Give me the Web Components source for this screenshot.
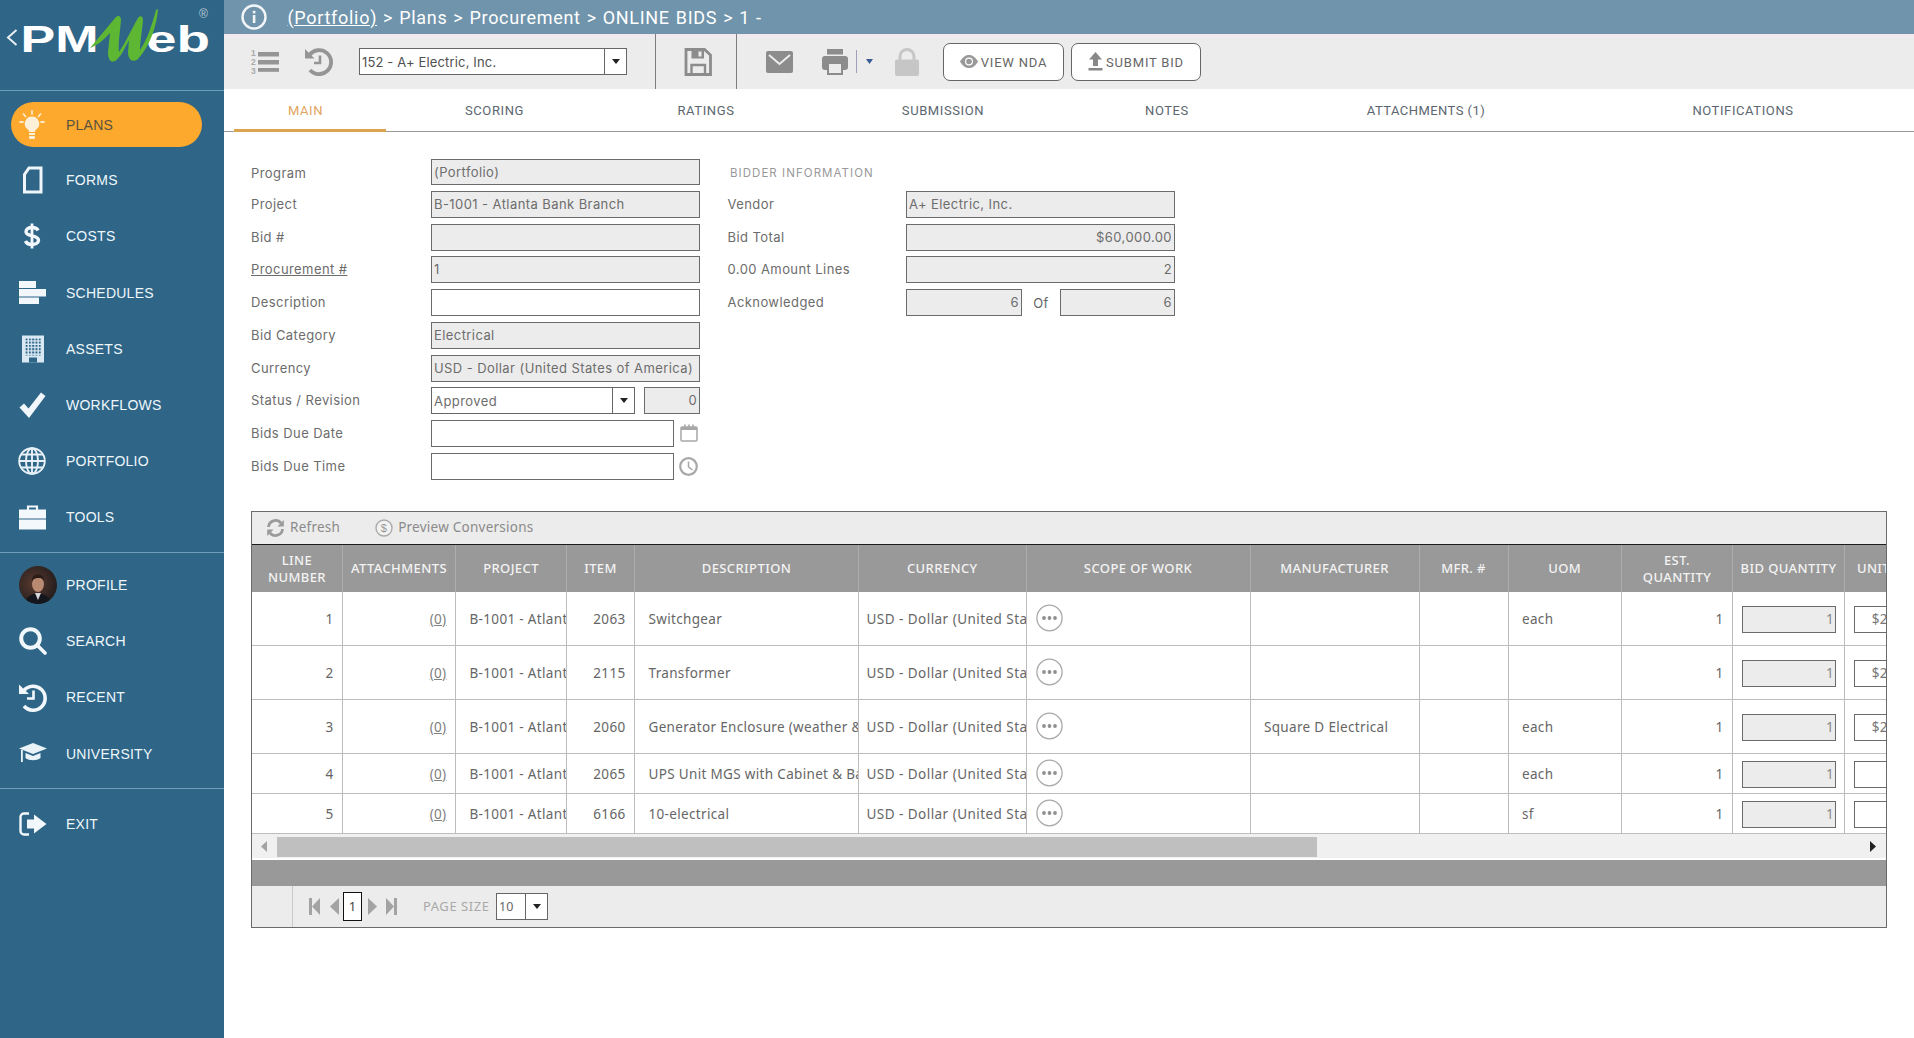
<!DOCTYPE html>
<html lang="en">
<head>
<meta charset="utf-8">
<title>PMWeb Online Bids</title>
<style>
html,body{margin:0;padding:0;height:100%;background:#fff;overflow:hidden}
body{font-family:"Liberation Sans",Arial,sans-serif}
pm-app{--form:Inter,"Noto Sans",sans-serif;--tbl:"Noto Sans",Roboto,sans-serif}
</style>
</head>
<body>
<script>
function def(tag, css, html, after){
  customElements.define(tag, class extends HTMLElement{
    connectedCallback(){
      if(this.shadowRoot) return;
      const r=this.attachShadow({mode:'open'});
      r.innerHTML='<style>'+css+'</style>'+(typeof html==='function'?html(this):html);
      if(after) after(this,r);
    }
  });
}
def('pm-app',':host{display:flex;height:1038px;width:1914px;overflow:hidden}main{flex:1;min-width:0;display:flex;flex-direction:column}',
 '<slot name="side"></slot><main><slot></slot></main>');

def('pm-sidebar',`:host{display:flex;flex-direction:column;width:224px;flex:none;background:#2f6587;color:#fff}
 .logo{height:90px;border-bottom:1px solid #6f9ebd;box-sizing:content-box}
 svg{display:block}
 .g1{padding:5px 0 6px;border-bottom:1px solid #6f9ebd}
 .g2{padding:4.500px 0 6px;border-bottom:1px solid #6f9ebd}
 .g3{padding:7px 0}`,
 `<div class="logo"><svg width="224" height="90" viewBox="0 0 224 90">
   <path d="M16.500 30 L8 37.500 L16.500 45" fill="none" stroke="#e8eef2" stroke-width="2"/>
   <text x="20.500" y="52" font-family="Liberation Sans" font-weight="700" font-size="36" fill="#fff" textLength="78" lengthAdjust="spacingAndGlyphs">PM</text>
   <text x="146" y="52" font-family="Liberation Sans" font-weight="700" font-size="36" fill="#fff" textLength="64" lengthAdjust="spacingAndGlyphs">eb</text>
   <path d="M90 48 L116 17 C118 15 121 16 121 20 C120 32 118 44 119 52 C126 42 132 28 138 18 C140 15 143 16 143 20 C142 32 140 42 140 50 C147 40 152 25 156 10 L158 9 C157 25 150 46 138 59 C133 63 128 60 128 52 L129 40 C124 50 120 58 115 61 C111 63 108 60 108 52 L110 33 C104 40 96 46 90 48Z" fill="#5eb733"/>
   <text x="199" y="18" font-family="Liberation Sans" font-size="12" fill="#b9c9d4">®</text>
  </svg></div>
  <div class="g1"><slot name="a"></slot></div>
  <div class="g2"><slot name="b"></slot></div>
  <div class="g3"><slot name="c"></slot></div>`);

def('pm-nav',`:host{display:flow-root;height:56.200px;position:relative}
 .row{display:flex;align-items:center;height:100%;padding-left:19px;font:14px "Liberation Sans",Arial,sans-serif;letter-spacing:.25px;color:#eef7fc}
 .ic{width:47px;flex:none;display:flex;align-items:center}
 :host([active]) .row{color:#5a5240;background:#fca92d;border-radius:23px;height:45px;margin:6px 22px 0 11px;padding-left:8px}`,
 '<div class="row"><span class="ic"><slot name="icon"></slot></span><slot></slot></div>');

def('pm-crumbs',`:host{display:flex;align-items:center;height:34px;background:#7094ab;color:#fff;font:18px Roboto,sans-serif;letter-spacing:.7px;word-spacing:.8px;white-space:nowrap;flex:none}
 svg{margin:0 20.500px 0 17px;display:block}`,
 `<svg width="26" height="26" viewBox="0 0 26 26"><circle cx="13" cy="13" r="11.500" fill="none" stroke="#f2f6f9" stroke-width="2.400"/><rect x="11.800" y="11" width="2.600" height="8" fill="#f2f6f9"/><rect x="11.800" y="6.800" width="2.600" height="2.600" fill="#f2f6f9"/></svg><span><slot></slot></span>`);

def('pm-toolbar',`:host{display:flex;align-items:center;height:55px;background:linear-gradient(#f0e9ed 0 3px,#ececec 3px);position:relative;flex:none}
 ::slotted(*){flex:none}`,'<slot></slot>');

def('pm-vsep',':host{display:block;width:1px;height:55px;background:#7d7d7d;align-self:flex-start}','');

def('pm-combo',`:host{display:flex;box-sizing:border-box;height:27px;border:1px solid #666;background:#fff;color:#505050;font:13px/26px var(--form);letter-spacing:.15px}
 .t{flex:1;padding-left:2px;overflow:hidden;white-space:nowrap}
 .a{flex:none;width:var(--aw,21px);border-left:1px solid #666;display:flex;align-items:center;justify-content:center}
 .a i{display:block;border:4.500px solid transparent;border-top:5.500px solid #222;border-bottom:0}`,
 '<div class="t"><slot></slot></div><div class="a"><i></i></div>');

def('pm-btn',`:host{display:flex;align-items:center;justify-content:center;gap:3px;box-sizing:border-box;height:38px;background:#fff;border:1px solid #666;border-radius:7px;color:#666;font:13px Roboto,sans-serif;letter-spacing:.8px}
 span{position:relative;top:1px}`,
 '<slot name="icon"></slot><span><slot></slot></span>');

def('pm-tabs',`:host{display:flex;height:43px;box-sizing:border-box;border-bottom:1px solid #9a9a9a;padding-left:9.600px;flex:none}`,'<slot></slot>');
def('pm-tab',`:host{display:flex;align-items:center;justify-content:center;box-sizing:border-box;height:43px;font:13px Roboto,sans-serif;letter-spacing:.6px;color:#5c6670}
 span{position:relative;top:-.5px}
 :host([active]){color:#e2a561;border-bottom:3px solid #dba44f;padding:3px 9px 0 0}`,'<span><slot></slot></span>');

def('pm-form',`:host{display:flex;padding:26.400px 0 0 27px;flex:none;height:379px;box-sizing:border-box;font:13px var(--form);letter-spacing:.42px;color:#6c6c6c}
 ::slotted(pm-col:first-child){width:449px}
 ::slotted(pm-col:last-child){width:447.500px;margin-left:27.500px}`,'<slot></slot>');
def('pm-col',':host{display:block}','<slot></slot>');
def('pm-row',`:host{display:grid;grid-template-columns:var(--lw,180px) 1fr;height:32.700px}
 .l{line-height:27px;white-space:nowrap;padding-top:var(--ly,0)}
 :host([link]) .l span{text-decoration:underline}
 :host([head]) .l{font-size:11.500px;letter-spacing:1.050px;color:#999;padding-left:2.500px}
 .c{display:flex;align-items:flex-start;min-width:0}
 ::slotted(*){flex:none}`,
 h=>`<div class="l"><span>${h.getAttribute('label')||''}</span></div><div class="c"><slot></slot></div>`);
def('pm-input',`:host{display:block;box-sizing:border-box;height:27px;width:var(--w,269px);border:1px solid #6b6b6b;background:#fff;color:#6d6d6d;padding:0 2px;font:13px/25px var(--form);letter-spacing:.42px;white-space:nowrap;overflow:hidden}
 :host([grey]){background:#ececec}
 :host([right]){text-align:right}`,'<slot></slot>');

def('pm-grid',`:host{display:block;margin-left:27px;width:1636px;box-sizing:border-box;border:1px solid #6a6a6a;flex:none}
 .bar{display:flex;align-items:center;height:32px;padding-bottom:0;background:#ececec;border-bottom:1.500px solid #1c1c1c;box-sizing:content-box;color:#8a8a8a;font:13.500px var(--tbl);letter-spacing:.25px}
 .bar span{position:relative;top:-1px}
 .bar svg{display:block}
 .wrap{overflow:hidden}
 table{border-collapse:separate;border-spacing:0;table-layout:fixed;width:1692.500px;font:13.500px var(--tbl);color:#666;letter-spacing:.33px}
 th{height:46.500px;box-sizing:border-box;background:#999;color:#f3f3f3;font:500 13px/17.700px var(--tbl);letter-spacing:.4px;text-align:center;border-right:1px solid #adadad;padding:2px 1px 0;vertical-align:middle;white-space:nowrap;overflow:hidden}
 td{box-sizing:border-box;border-right:1px solid #bdbdbd;border-bottom:1px solid #bdbdbd;padding:1.500px 8.500px 0 13.500px;white-space:nowrap;overflow:hidden;vertical-align:middle;background:#fff}
 td.r{text-align:right;padding-left:2px}
 td.cur{padding-left:7.500px;padding-right:0;letter-spacing:.46px}
 td.pr{padding-right:0}
 td.z{padding:2px 8px 0 9px}
 td.un{padding:2px 0 0 9px;overflow:visible}
 td.att{color:#808080}
 .in{box-sizing:border-box;height:27px;border:1px solid #6b6b6b;line-height:25px;text-align:right;padding-right:1px;color:#888}
 .in.g{background:#ececec;width:94px}
 .in.w{background:#fff;width:94px;padding-right:3px;color:#777}
 .dots{display:block;margin-top:-3px}
 .sb{display:flex;height:24px;padding-top:3px;box-sizing:border-box;background:#f0f0f0}
 .sb .th{height:20px;width:1040px;background:#bfbfbf}
 .sb .la{width:24.500px;display:flex;align-items:center;justify-content:center;height:20px}
 .sb .ra{margin-left:auto;width:28px;display:flex;align-items:center;justify-content:center;height:20px}
 .dark{height:26px;margin-top:2px;background:#999}
 .pg{display:flex;align-items:center;height:41px;background:#ececec;font:13px var(--tbl);color:#a9a9a9;letter-spacing:.55px}
 .pg .s{width:39.500px;height:100%;border-right:1px solid #c9c9c9;flex:none}
 .pg svg{display:block;flex:none}
 .pg .n{width:19px;height:29px;box-sizing:border-box;border:1.500px solid #111;background:#fff;color:#444;display:flex;align-items:center;justify-content:center;flex:none;letter-spacing:0}
 .pg .lbl{margin-left:26px;width:73px;white-space:nowrap}
 pm-combo{width:52px;--aw:21px;font:12.500px/25px var(--tbl);letter-spacing:0;color:#666}`,
 ()=>{
  const cols=[91,113,111,68,224,167.5,224,169,89,113.5,111,112,100];
  const heads=['LINE<br>NUMBER','ATTACHMENTS','PROJECT','ITEM','DESCRIPTION','CURRENCY','SCOPE OF WORK','MANUFACTURER','MFR. #','UOM','EST.<br>QUANTITY','BID QUANTITY','UNIT PRICE'];
  const rows=[[54,'1','2063','Switchgear','','each','$20,000.00'],[54,'2','2115','Transformer','','','$20,000.00'],[54,'3','2060','Generator Enclosure (weather &amp; sound attenuated)','Square D Electrical','each','$20,000.00'],[40,'4','2065','UPS Unit MGS with Cabinet &amp; Batteries','','each',''],[40,'5','6166','10-electrical','','sf','']];
  const dots='<svg class="dots" width="27" height="28" viewBox="0 0 27 28"><ellipse cx="13.500" cy="14" rx="12.600" ry="12.800" fill="#fff" stroke="#a9a9a9" stroke-width="1.300"/><circle cx="8" cy="14" r="1.900" fill="#8f8f8f"/><circle cx="13.500" cy="14" r="1.900" fill="#8f8f8f"/><circle cx="19" cy="14" r="1.900" fill="#8f8f8f"/></svg>';
  const body=rows.map(r=>`<tr style="height:${r[0]}px"><td class="r">${r[1]}</td><td class="r att"><span style="text-decoration:underline">(0)</span></td><td class="pr">B-1001 - Atlanta Bank Branch</td><td class="r">${r[2]}</td><td class="pr">${r[3]}</td><td class="cur">USD - Dollar (United States of America)</td><td class="z">${dots}</td><td>${r[4]}</td><td></td><td>${r[5]}</td><td class="r">1</td><td class="z"><div class="in g">1</div></td><td class="un"><div class="in w">${r[6]}</div></td></tr>`).join('');
  return `<div class="bar">
    <svg style="margin-left:14px" width="19" height="18" viewBox="0 0 19 18"><path d="M2.500 8A7 7 0 0 1 15 4.200" fill="none" stroke="#9a9a9a" stroke-width="2.800"/><path d="M17.800 1V7.500H11.500Z" fill="#9a9a9a"/><path d="M16.500 10A7 7 0 0 1 4 13.800" fill="none" stroke="#9a9a9a" stroke-width="2.800"/><path d="M1.200 17V10.500H7.500Z" fill="#9a9a9a"/></svg>
    <span style="margin-left:5px">Refresh</span>
    <svg style="margin-left:35px" width="18" height="18" viewBox="0 0 18 18"><circle cx="9" cy="9" r="8" fill="#f2f2f2" stroke="#aaa" stroke-width="1.400"/><text x="9" y="13" text-anchor="middle" font-family="Liberation Sans" font-size="11" fill="#999">$</text></svg>
    <span style="margin-left:5px">Preview Conversions</span>
   </div>
   <div class="wrap"><table><colgroup>${cols.map(c=>`<col style="width:${c}px">`).join('')}</colgroup><thead><tr>${heads.map(h=>`<th>${h}</th>`).join('')}</tr></thead><tbody>${body}</tbody></table></div>
   <div class="sb"><div class="la"><svg width="7" height="11" viewBox="0 0 7 11"><path d="M6 0V11L0 5.500Z" fill="#a3a3a3"/></svg></div><div class="th"></div><div class="ra"><svg width="7" height="11" viewBox="0 0 7 11"><path d="M1 0V11L7 5.500Z" fill="#222"/></svg></div></div>
   <div class="dark"></div>
   <div class="pg"><div class="s"></div>
    <svg style="margin-left:16px" width="11" height="17" viewBox="0 0 11 17"><rect width="3" height="17" fill="#a3a3a3"/><path d="M11 0V17L3 8.500Z" fill="#a3a3a3"/></svg>
    <svg style="margin-left:10px" width="9" height="17" viewBox="0 0 9 17"><path d="M9 0V17L0 8.500Z" fill="#a3a3a3"/></svg>
    <div class="n" style="margin-left:4.500px">1</div>
    <svg style="margin-left:6px" width="9" height="17" viewBox="0 0 9 17"><path d="M0 0V17L9 8.500Z" fill="#a3a3a3"/></svg>
    <svg style="margin-left:9px" width="11" height="17" viewBox="0 0 11 17"><rect x="8" width="3" height="17" fill="#a3a3a3"/><path d="M0 0V17L8 8.500Z" fill="#a3a3a3"/></svg>
    <span class="lbl">PAGE SIZE</span><pm-combo>10</pm-combo></div>`;
 });
</script>

<pm-app>
 <pm-sidebar slot="side">
  <pm-nav slot="a" active><svg slot="icon" width="26" height="30" viewBox="0 0 26 30" style="display:block"><g stroke="#fbe8c6" stroke-width="1.800" stroke-linecap="round"><path d="M13 1V4M4.500 4L6.500 6.500M21.500 4L19.500 6.500M1 12H4M25 12H22"/></g><path d="M13 6.500A7.200 7.200 0 0 0 8.500 19.300C9.800 20.500 10 21 10 22H16C16 21 16.200 20.500 17.500 19.300A7.200 7.200 0 0 0 13 6.500Z" fill="#fdf0d8"/><rect x="10" y="23" width="6" height="2" fill="#fdf0d8"/><rect x="10" y="26" width="6" height="3" rx="1" fill="#fdf0d8"/></svg>PLANS</pm-nav>
  <pm-nav slot="a"><svg slot="icon" width="26" height="28" viewBox="0 0 26 28" style="display:block"><path d="M10 2H22V26H5.500V8.500Z" fill="none" stroke="#eff6fa" stroke-width="3"/></svg>FORMS</pm-nav>
  <pm-nav slot="a"><svg slot="icon" width="26" height="28" viewBox="0 0 26 28" style="display:block"><path d="M19 8.500C18 6 15.500 5.500 13 5.500C9.500 5.500 7 7.200 7 9.800C7 15.200 19.500 12.500 19.500 18.300C19.500 21 16.500 22.500 13 22.500C10 22.500 7.500 21.500 6.500 19" fill="none" stroke="#f2f8fb" stroke-width="3.400"/><path d="M13 1.500V26.500" stroke="#f2f8fb" stroke-width="2.800"/></svg>COSTS</pm-nav>
  <pm-nav slot="a"><svg slot="icon" width="27" height="24" viewBox="0 0 27 24" style="display:block"><rect x="0" y="0" width="17" height="7" fill="#f1f7fb"/><rect x="0" y="8" width="27" height="7.500" fill="#f1f7fb"/><rect x="0" y="16.500" width="20" height="6.500" fill="#f1f7fb"/></svg>SCHEDULES</pm-nav>
  <pm-nav slot="a"><svg slot="icon" width="27" height="28" viewBox="0 0 27 28" style="display:block"><defs><pattern id="w" width="3.300" height="3.300" patternUnits="userSpaceOnUse"><rect width="2" height="2" fill="#2f6587"/></pattern></defs><rect x="3" y="0.500" width="22" height="27" fill="#d9e9f4"/><rect x="6" y="3.500" width="16" height="17" fill="url(#w)"/><path d="M10 27.500V22.500H18V27.500Z" fill="#2f6587"/></svg>ASSETS</pm-nav>
  <pm-nav slot="a"><svg slot="icon" width="27" height="27" viewBox="0 0 27 27" style="display:block"><path d="M0.500 15.500L5 11.500L9.500 16.500L22 0.500L26.500 4L10 26Z" fill="#f1f7fb"/></svg>WORKFLOWS</pm-nav>
  <pm-nav slot="a"><svg slot="icon" width="28" height="28" viewBox="0 0 28 28" style="display:block;margin-left:-1px"><g fill="none" stroke="#e7f1f7" stroke-width="1.900"><circle cx="14" cy="14" r="12.800"/><ellipse cx="14" cy="14" rx="6" ry="12.800"/><path d="M14 1.200V26.800M1.200 14H26.800M3 7.500H25M3 20.500H25"/></g></svg>PORTFOLIO</pm-nav>
  <pm-nav slot="a"><svg slot="icon" width="27" height="26" viewBox="0 0 27 26" style="display:block"><path d="M9 6V2.500H18V6" fill="none" stroke="#f2f8fb" stroke-width="2.200"/><rect x="0" y="5.500" width="27" height="9" fill="#f2f8fb"/><rect x="0" y="15.500" width="27" height="10" fill="#f2f8fb"/></svg>TOOLS</pm-nav>

  <pm-nav slot="b"><svg slot="icon" width="38" height="38" viewBox="0 0 38 38" style="display:block"><defs><clipPath id="av"><circle cx="19" cy="19" r="19"/></clipPath><radialGradient id="bg" cx=".4" cy=".45" r=".7"><stop offset="0" stop-color="#5a3a2e"/><stop offset="1" stop-color="#1d1a1c"/></radialGradient></defs><g clip-path="url(#av)"><rect width="38" height="38" fill="url(#bg)"/><path d="M6 38C7 30 13 28 19 27C25 28 31 30 32 38Z" fill="#14161d"/><path d="M16 27L19 34L22 27Z" fill="#d8d8dc"/><ellipse cx="19" cy="18" rx="6" ry="8" fill="#b98a72"/><path d="M13 16C12.500 10 16 8.500 19 8.500C22.500 8.500 25.500 10.500 25 16C24 12.500 22 12 19 12C16 12 14 13 13 16Z" fill="#2a1d18"/></g></svg>PROFILE</pm-nav>
  <pm-nav slot="b"><svg slot="icon" width="28" height="28" viewBox="0 0 28 28" style="display:block"><circle cx="11.500" cy="11.500" r="9.300" fill="none" stroke="#f1f7fb" stroke-width="4"/><path d="M18 18L26 26" stroke="#f1f7fb" stroke-width="3.600" stroke-linecap="round"/></svg>SEARCH</pm-nav>
  <pm-nav slot="b"><svg slot="icon" width="28" height="31" viewBox="0 0 28 31" style="display:block"><path d="M5 8.500A12 12 0 1 1 5 24" fill="none" stroke="#f1f7fb" stroke-width="3.600"/><path d="M0 2.500V12H10Z" fill="#f1f7fb"/><path d="M14.500 8.500V16.500H8" fill="none" stroke="#f1f7fb" stroke-width="2.600"/></svg>RECENT</pm-nav>
  <pm-nav slot="b"><svg slot="icon" width="28" height="21" viewBox="0 0 28 21" style="display:block"><path d="M14 0L28 5.500L14 11L0 5.500Z" fill="#eaf3f8"/><path d="M6.500 10V15C10 18 18 18 21.500 15V10L14 13Z" fill="#eaf3f8"/><rect x="2" y="7" width="1.800" height="12" fill="#eaf3f8"/></svg>UNIVERSITY</pm-nav>

  <pm-nav slot="c"><svg slot="icon" width="28" height="24" viewBox="0 0 28 24" style="display:block"><path d="M10 1.500H5A3.500 3.500 0 0 0 1.500 5V19A3.500 3.500 0 0 0 5 22.500H10" fill="none" stroke="#f1f7fb" stroke-width="2.400"/><path d="M8 7.500H15V2.500L27.500 12L15 21.500V16.500H8Z" fill="#f1f7fb"/></svg>EXIT</pm-nav>
 </pm-sidebar>

 <pm-crumbs><span style="text-decoration:underline">(Portfolio)</span> &gt; Plans &gt; Procurement &gt; ONLINE BIDS &gt; 1 -</pm-crumbs>

 <pm-toolbar>
  <svg style="margin-left:27px" width="28" height="27" viewBox="0 0 28 27"><g font-family="Liberation Sans" font-size="8.500" font-weight="700" fill="#aaa"><text x="0" y="8">1</text><text x="0" y="17">2</text><text x="0" y="26">3</text></g><g fill="#959595"><rect x="7" y="4" width="21" height="4.500"/><rect x="7" y="12" width="21" height="4.500"/><rect x="7" y="20" width="21" height="3.800"/></g></svg>
  <svg style="margin-left:25px" width="29" height="28" viewBox="0 0 29 28"><path d="M5.500 7A12 12 0 1 1 6 22" fill="none" stroke="#959595" stroke-width="3.800"/><path d="M1 1V10.500H10.500Z" fill="#959595"/><path d="M16 7.500V15H10" fill="none" stroke="#959595" stroke-width="2.600"/></svg>
  <pm-combo style="margin-left:26px;width:268px">152 - A+ Electric, Inc.</pm-combo>
  <pm-vsep style="margin-left:28px"></pm-vsep>
  <svg style="margin-left:28px" width="28" height="28" viewBox="0 0 28 28"><path d="M2 1.500H20.500L26.500 7V26.500H2Z" fill="none" stroke="#8c8c8c" stroke-width="2.800"/><path d="M7.500 2V10.500H20V2Z" fill="#8c8c8c"/><rect x="14.500" y="3.500" width="3" height="5" fill="#ececec"/><path d="M7.500 26V17H21V26" fill="none" stroke="#8c8c8c" stroke-width="2.400"/></svg>
  <pm-vsep style="margin-left:24px"></pm-vsep>
  <svg style="margin-left:29px" width="27" height="22" viewBox="0 0 27 22"><rect width="27" height="22" rx="2" fill="#8c8c8c"/><path d="M3 4L13.500 13L24 4" fill="none" stroke="#ececec" stroke-width="2"/></svg>
  <svg style="margin-left:29px" width="26" height="26" viewBox="0 0 26 26"><rect x="5" y="0" width="16" height="5.500" fill="#8c8c8c"/><rect x="0" y="7" width="26" height="14" rx="3" fill="#8c8c8c"/><rect x="6" y="14" width="14" height="11" fill="#ececec" stroke="#8c8c8c" stroke-width="2"/></svg>
  <span style="margin-left:8px;width:1px;height:23px;background:#9ea0b8"></span>
  <svg style="margin-left:9px" width="7" height="5" viewBox="0 0 7 5"><path d="M0 0H7L3.500 5Z" fill="#3a5a94"/></svg>
  <svg style="margin-left:22px" width="24" height="28" viewBox="0 0 24 28"><path d="M5 13V8.500A7 7 0 0 1 19 8.500V13" fill="none" stroke="#c6c6c6" stroke-width="3"/><rect x="0" y="11.500" width="24" height="16.500" rx="2" fill="#c6c6c6"/></svg>
  <pm-btn style="margin-left:24px;width:121px"><svg slot="icon" width="18" height="13" viewBox="0 0 18 13"><path d="M0 6.500C3 1.500 6 0 9 0S15 1.500 18 6.500C15 11.500 12 13 9 13S3 11.500 0 6.500Z" fill="#999"/><circle cx="9" cy="6.500" r="4" fill="#fff"/><circle cx="9" cy="6.500" r="2.800" fill="#999"/></svg>VIEW NDA</pm-btn>
  <pm-btn style="margin-left:7px;width:130px"><svg slot="icon" width="15" height="19" viewBox="0 0 15 19"><path d="M7.500 0L14 7.500H10V14H5V7.500H1Z" fill="#888"/><rect x="0.500" y="16" width="14" height="2.500" fill="#888"/></svg>SUBMIT BID</pm-btn>
 </pm-toolbar>

 <pm-tabs>
  <pm-tab active style="width:152.900px">MAIN</pm-tab>
  <pm-tab style="width:216px">SCORING</pm-tab>
  <pm-tab style="width:207px">RATINGS</pm-tab>
  <pm-tab style="width:267px">SUBMISSION</pm-tab>
  <pm-tab style="width:181px">NOTES</pm-tab>
  <pm-tab style="width:337px;letter-spacing:.45px">ATTACHMENTS (1)</pm-tab>
  <pm-tab style="width:297px">NOTIFICATIONS</pm-tab>
 </pm-tabs>

 <pm-form>
  <pm-col>
   <pm-row label="Program" style="--ly:1.500px"><pm-input grey style="height:26px;margin-top:1px;line-height:24px">(Portfolio)</pm-input></pm-row>
   <pm-row label="Project"><pm-input grey>B-1001 - Atlanta Bank Branch</pm-input></pm-row>
   <pm-row label="Bid #"><pm-input grey></pm-input></pm-row>
   <pm-row label="Procurement #" link><pm-input grey>1</pm-input></pm-row>
   <pm-row label="Description"><pm-input></pm-input></pm-row>
   <pm-row label="Bid Category"><pm-input grey>Electrical</pm-input></pm-row>
   <pm-row label="Currency"><pm-input grey>USD - Dollar (United States of America)</pm-input></pm-row>
   <pm-row label="Status / Revision"><pm-combo style="width:204px;letter-spacing:.42px;color:#6d6d6d">Approved</pm-combo><pm-input grey right style="--w:56px;margin-left:9px">0</pm-input></pm-row>
   <pm-row label="Bids Due Date"><pm-input style="--w:243px"></pm-input><svg style="margin:4px 0 0 6px" width="18" height="18" viewBox="0 0 18 18"><rect x="1" y="3" width="16" height="14" rx="1" fill="#fff" stroke="#a8a8a8" stroke-width="1.500"/><rect x="1" y="3" width="16" height="3" fill="#a8a8a8"/><path d="M5 0.500V4M9 0.500V4M13 0.500V4" stroke="#a8a8a8" stroke-width="1.600"/></svg></pm-row>
   <pm-row label="Bids Due Time"><pm-input style="--w:243px"></pm-input><svg style="margin:4px 0 0 5px" width="19" height="19" viewBox="0 0 19 19"><circle cx="9.500" cy="9.500" r="8.300" fill="#fff" stroke="#a8a8a8" stroke-width="2.200"/><path d="M9.500 4.500V9.800L13.500 13" fill="none" stroke="#a8a8a8" stroke-width="1.500"/></svg></pm-row>
  </pm-col>
  <pm-col style="--lw:178.500px">
   <pm-row head label="BIDDER INFORMATION" style="--ly:2px"></pm-row>
   <pm-row label="Vendor"><pm-input grey>A+ Electric, Inc.</pm-input></pm-row>
   <pm-row label="Bid Total"><pm-input grey right>$60,000.00</pm-input></pm-row>
   <pm-row label="0.00 Amount Lines"><pm-input grey right>2</pm-input></pm-row>
   <pm-row label="Acknowledged"><pm-input grey right style="--w:116px">6</pm-input><span style="width:38px;line-height:27px;text-align:center;color:#666;position:relative;top:1px">Of</span><pm-input grey right style="--w:115px">6</pm-input></pm-row>
  </pm-col>
 </pm-form>

 <pm-grid></pm-grid>
</pm-app>
</body>
</html>
